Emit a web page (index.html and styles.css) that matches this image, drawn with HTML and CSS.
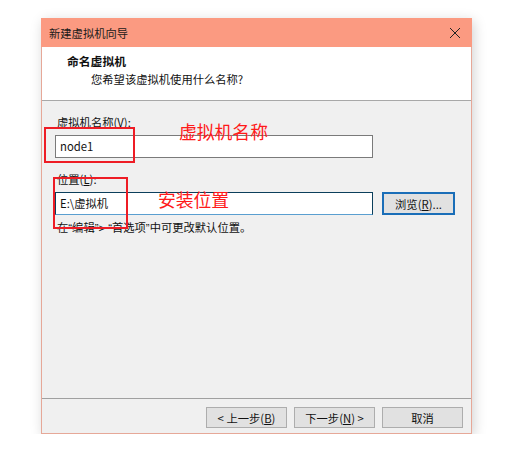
FILE: index.html
```html
<!DOCTYPE html>
<html lang="zh-CN">
<head>
<meta charset="utf-8">
<title>新建虚拟机向导</title>
<link rel="stylesheet" href="styles.css">
</head>
<body>
<div class="dialog">
  <div class="titlebar">
    <span class="title">新建虚拟机向导</span>
    <svg class="close" width="12" height="12" viewBox="0 0 12 12"><path d="M1 1L11 11M11 1L1 11" stroke="#222" stroke-width="1" fill="none"/></svg>
  </div>
  <div class="header">
    <div class="h-title">命名虚拟机</div>
    <div class="h-sub">您希望该虚拟机使用什么名称?</div>
  </div>
  <div class="content">
    <div class="label">虚拟机名称(<u>V</u>):</div>
    <div class="row">
      <div class="input name-input">node1</div>
    </div>
    <div class="label label2">位置(<u>L</u>):</div>
    <div class="row">
      <div class="input loc-input">E:\虚拟机</div>
      <div class="btn browse">浏览(<u>R</u>)...</div>
    </div>
    <div class="hint">在<span class="q">“</span>编辑<span class="q">”&gt; “</span>首选项<span class="q">”</span>中可更改默认位置。</div>

    <div class="mark mark1"></div>
    <div class="mark mark2"></div>
    <div class="note note1">虚拟机名称</div>
    <div class="note note2">安装位置</div>
  </div>
  <div class="footer">
    <div class="btn fbtn">&lt; 上一步(<u>B</u>)</div>
    <div class="btn fbtn">下一步(<u>N</u>) &gt;</div>
    <div class="btn fbtn">取消</div>
  </div>
</div>
</body>
</html>
```
FILE: styles.css
```css
html, body {
  margin: 0;
  padding: 0;
  background: #ffffff;
}
body {
  font-family: "Noto Sans CJK SC", "Microsoft YaHei", sans-serif;
  font-size: 11.3px;
  color: #111;
  padding: 18px 0 0 41px;
}
.dialog {
  width: 431px;
  height: 416px;
  box-sizing: border-box;
  border: 1px solid #e6a898;
  border-top: none;
  background: #f0f0f0;
  display: flex;
  flex-direction: column;
  box-shadow: 2px 3px 12px rgba(0,0,0,0.18);
}
.titlebar {
  height: 29px;
  margin: 0 -1px;
  background: #fb9a81;
  display: flex;
  align-items: center;
  justify-content: space-between;
  padding: 0 11px 0 8px;
}
.title {
  font-size: 11.3px;
  color: #1a1a1a;
}
.close {
  display: block;
}
.header {
  height: 53px;
  background: #ffffff;
  border-bottom: 1px solid #a8a8a8;
  padding: 0 0 0 25px;
  display: flex;
  flex-direction: column;
  justify-content: flex-start;
  box-sizing: content-box;
}
.h-title {
  font-weight: bold;
  font-size: 11.8px;
  line-height: 16px;
  margin-top: 6px;
}
.h-sub {
  line-height: 16px;
  margin-top: 2px;
  padding-left: 24px;
}
.content {
  flex: 1;
  position: relative;
  padding: 13px 0 0 13px;
}
.label {
  line-height: 16px;
  padding-left: 2px;
}
.label u, .btn u { text-decoration: underline; }
.label2 { margin-top: 13px; }
.row {
  display: flex;
  align-items: center;
  margin-top: 5px;
}
.input {
  box-sizing: border-box;
  height: 23px;
  width: 318px;
  background: #fff;
  border: 1px solid #7a7a7a;
  padding: 0 4px;
  line-height: 21px;
}
.loc-input {
  border-color: #0b3f5c;
  border-bottom-color: #5a9fd0;
}
.btn {
  box-sizing: border-box;
  background: #e1e1e1;
  border: 1px solid #adadad;
  height: 21px;
  display: flex;
  align-items: center;
  justify-content: center;
}
.browse {
  width: 73px;
  height: 23px;
  margin-left: 9px;
  border: 2px solid #1a6eb8;
}
.hint {
  margin-top: 4px;
  line-height: 16px;
  padding-left: 2px;
}
.q {
  font-family: "Liberation Sans", sans-serif;
}
.mark {
  position: absolute;
  border: 2px solid #ee1c25;
}
.mark1 {
  left: 2px;
  top: 26px;
  width: 87px;
  height: 32px;
}
.mark2 {
  left: 11px;
  top: 76px;
  width: 71px;
  height: 48px;
}
.note {
  position: absolute;
  color: #ff1a1a;
  font-size: 17.8px;
  line-height: 22px;
}
.note1 { left: 137px; top: 19px; }
.note2 { left: 116px; top: 87px; }
.footer {
  height: 35px;
  border-top: 1px solid #a0a0a0;
  display: flex;
  justify-content: flex-end;
  align-items: flex-start;
  gap: 7px;
  padding: 8px 8px 0 0;
  box-sizing: border-box;
}
.fbtn {
  width: 81px;
}
```
